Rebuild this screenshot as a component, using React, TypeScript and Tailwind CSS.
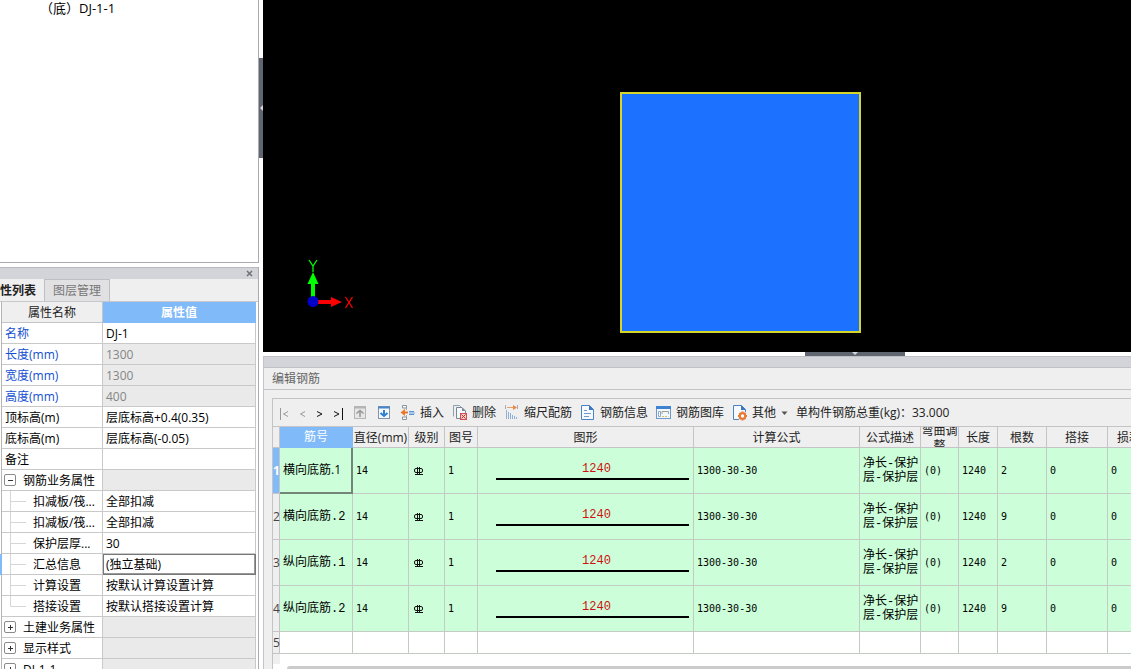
import { ReactNode } from "react";
import clsx from "clsx";

interface Property {
  name: string;
  value?: string;
  kind?: "key" | "locked" | "group" | "child";
  open?: boolean;
  last?: boolean;
  selected?: boolean;
}

const properties: Property[] = [
  { name: "名称", value: "DJ-1", kind: "key" },
  { name: "长度(mm)", value: "1300", kind: "locked" },
  { name: "宽度(mm)", value: "1300", kind: "locked" },
  { name: "高度(mm)", value: "400", kind: "locked" },
  { name: "顶标高(m)", value: "层底标高+0.4(0.35)" },
  { name: "底标高(m)", value: "层底标高(-0.05)" },
  { name: "备注" },
  { name: "钢筋业务属性", kind: "group", open: true },
  { name: "扣减板/筏...", value: "全部扣减", kind: "child" },
  { name: "扣减板/筏...", value: "全部扣减", kind: "child" },
  { name: "保护层厚...", value: "30", kind: "child" },
  { name: "汇总信息", value: "(独立基础)", kind: "child", selected: true },
  { name: "计算设置", value: "按默认计算设置计算", kind: "child" },
  { name: "搭接设置", value: "按默认搭接设置计算", kind: "child", last: true },
  { name: "土建业务属性", kind: "group" },
  { name: "显示样式", kind: "group" },
  { name: "DJ-1-1", kind: "group" },
];

const bars = [
  { name: "横向底筋.1", count: 2 },
  { name: "横向底筋.2", count: 9 },
  { name: "纵向底筋.1", count: 2 },
  { name: "纵向底筋.2", count: 9 },
];

const columns = [
  { title: "直径(mm)", width: "w-[56px]" },
  { title: "级别", width: "w-[36px]" },
  { title: "图号", width: "w-[33px]" },
  { title: "图形", width: "w-[216px]" },
  { title: "计算公式", width: "w-[166px]" },
  { title: "公式描述", width: "w-[61px]" },
  { title: "弯曲调整", width: "w-[38px]" },
  { title: "长度", width: "w-[39px]" },
  { title: "根数", width: "w-[49px]" },
  { title: "搭接", width: "w-[61px]" },
  { title: "损耗", width: "w-auto" },
];

function Icon({ children }: { children: ReactNode }) {
  return (
    <svg
      viewBox="0 0 16 16"
      className="h-4 w-4 shrink-0"
      fill="none"
      aria-hidden="true"
    >
      {children}
    </svg>
  );
}

function NavButton({ label, children }: { label: string; children: ReactNode }) {
  return (
    <button aria-label={label} className="h-4 w-[10px] shrink-0">
      <svg viewBox="0 0 10 16" className="h-4 w-[10px]" fill="none">
        {children}
      </svg>
    </button>
  );
}

function ToolButton({ icon, label }: { icon: ReactNode; label: string }) {
  return (
    <button className="flex shrink-0 items-center gap-1">
      {icon}
      <span>{label}</span>
    </button>
  );
}

function Toolbar() {
  return (
    <div className="flex h-[28px] items-center gap-2 overflow-hidden border-b border-[#c4c4c6] pt-px pl-[7px] whitespace-nowrap text-[#222]">
      <NavButton label="第一条">
        <path d="M.5 3v12" stroke="#999" />
        <path d="M8 6.500 3.500 9 8 11.500" stroke="#999" />
      </NavButton>
      <NavButton label="上一条">
        <path d="M7 6.500 2.500 9 7 11.500" stroke="#999" />
      </NavButton>
      <NavButton label="下一条">
        <path d="M1 6.500 6 9l-5 2.500" stroke="#111" />
      </NavButton>
      <NavButton label="最后一条">
        <path d="M8.500 3v12" stroke="#111" />
        <path d="M0 6.500 5 9l-5 2.500" stroke="#111" />
      </NavButton>
      <button aria-label="上移" className="shrink-0">
        <Icon>
          <rect x="2.500" y="1.500" width="11" height="12" fill="#e6e6e6" stroke="#b5b5b5" />
          <path d="M2 2.500h12" stroke="#b5b5b5" strokeWidth="2" />
          <path d="M8 12V6M4.500 8.500 8 5.500l3.500 3" stroke="#999" strokeWidth="1.600" />
        </Icon>
      </button>
      <button aria-label="下移" className="shrink-0">
        <Icon>
          <rect x="2.500" y="1.500" width="11" height="12" fill="#f6fafe" stroke="#7f95ad" />
          <path d="M2 2.500h12" stroke="#4a86c8" strokeWidth="2" />
          <path d="M8 5v6M4.500 8 8 11l3.500-3" stroke="#2f80d0" strokeWidth="2" />
        </Icon>
      </button>
      <ToolButton
        label="插入"
        icon={
          <Icon>
            <path d="M2.500 3V.5h4V3z" fill="#fafafa" stroke="#8a949e" />
            <path d="M2.500 14.500V12h4v2.500z" fill="#fafafa" stroke="#8a949e" />
            <path d="M6.500 3v2M6.500 10v2" stroke="#a5acb3" />
            <path d="M8 7.500H4" stroke="#e8772e" strokeWidth="2" />
            <path d="M.5 7.500 5 4v7z" fill="#e8772e" />
            <path d="M9 6.500h5M9 9.500h5" stroke="#5d94d3" />
            <path d="M9 8h6" stroke="#a9c8ea" strokeWidth="2" />
          </Icon>
        }
      />
      <ToolButton
        label="删除"
        icon={
          <Icon>
            <path d="M1.500 11.500v-11h6l2 2" stroke="#8fa0ae" />
            <path d="M4.500 13.500v-11h5.500l3.500 3.500v3" fill="#f5f8fb" stroke="#7a8794" />
            <path d="M4.500 13.500H8" stroke="#7a8794" />
            <path d="M10 2.500 13.500 6H10z" fill="#7a8794" />
            <rect x="8.500" y="8.500" width="6" height="6" fill="#f6d0d0" stroke="#d64d4d" />
            <path d="m9.500 9.500 4 4m0-4-4 4" stroke="#cc2d2d" />
          </Icon>
        }
      />
      <ToolButton
        label="缩尺配筋"
        icon={
          <Icon>
            <path d="M1.500 0v4M13.500 0v4" stroke="#aaa" />
            <path d="M3 2.500h7" stroke="#e8a070" />
            <path d="M9 0l4 2.500L9 5z" fill="#e8884a" />
            <path
              d="M2.500 5v9M4.500 7v7M6.500 8v6M8.500 10v4M10.500 11v3M12.500 12v2"
              stroke="#8fb0d8"
            />
          </Icon>
        }
      />
      <ToolButton
        label="钢筋信息"
        icon={
          <Icon>
            <path d="M1.500 .5h8l4 4v10h-12z" fill="#f6faff" stroke="#4a84c4" />
            <path d="M9 0v5h5z" fill="#3b78bd" />
            <path d="M4 5.500h3M4 8.500h7M4 11.500h5" stroke="#6d9bce" />
          </Icon>
        }
      />
      <ToolButton
        label="钢筋图库"
        icon={
          <Icon>
            <rect x=".5" y="1.500" width="14" height="12" fill="#f2f7fc" stroke="#6c9ace" />
            <rect y="1" width="15" height="3" fill="#3e83d2" />
            <path d="M2.500 6.500h2v5h-2z" fill="#fff" stroke="#8fa8c4" />
            <path d="M6 9V6.500h6.500V9" stroke="#99a39a" />
            <path d="M6 11.500h6.500" stroke="#d9b96a" strokeDasharray="2 1" />
          </Icon>
        }
      />
      <button className="flex shrink-0 items-center gap-1">
        <Icon>
          <path d="M1.500 .5h8l4 4v10h-12z" fill="#f6faff" stroke="#4a84c4" />
          <path d="M9 0v5h5z" fill="#3b78bd" />
          <circle cx="10.500" cy="11" r="5" fill="#efefef" />
          <path
            d="M10.500 6.500v9M6 11h9M7.500 8l6 6M13.500 8l-6 6"
            stroke="#e97931"
            strokeWidth="2"
          />
          <circle cx="10.500" cy="11" r="2.700" fill="#fff" stroke="#e97931" strokeWidth="2" />
        </Icon>
        <span>其他</span>
        <svg viewBox="0 0 8 8" className="h-2 w-2" aria-hidden="true">
          <path d="M1.500 2.500h6L4.500 6z" fill="#555" />
        </svg>
      </button>
      <span>单构件钢筋总重(kg)：33.000</span>
    </div>
  );
}

function PropertyRow({ item }: { item: Property }) {
  const isBlue = item.kind === "key" || item.kind === "locked";
  const isGrey = item.kind === "locked" || item.kind === "group";
  return (
    <tr className="h-[21px]">
      <th
        scope="row"
        className={clsx(
          "overflow-hidden border-r border-b border-[#c9c9c9] p-0 text-left font-normal whitespace-nowrap",
          item.selected && "shadow-[-2px_0_0_#80baf9]",
          isBlue && "text-[#1450d0]"
        )}
      >
        <div className="flex h-5 items-center">
          {item.kind === "group" && (
            <button
              aria-label={item.name}
              className="mr-[7px] ml-[2px] h-3 w-3 shrink-0 rounded-xs border border-[#8a8a8a] bg-white"
            >
              <svg viewBox="0 0 10 10" className="h-[10px] w-[10px]" stroke="#333">
                <path d={item.open ? "M3 5.500h5" : "M3 5.500h5M5.500 3v5"} />
              </svg>
            </button>
          )}
          {item.kind === "child" && (
            <svg
              viewBox="0 0 31 21"
              className="h-[21px] w-[31px] shrink-0"
              stroke="#d6d6d6"
              fill="none"
              aria-hidden="true"
            >
              <path d={item.last ? "M8.500 0v10.500H24" : "M8.500 0v21M8.500 10.500H24"} />
            </svg>
          )}
          <span className={clsx("pt-px", (!item.kind || isBlue) && "pl-[3px]")}>
            {item.name}
          </span>
        </div>
      </th>
      <td
        className={clsx(
          "overflow-hidden p-0 pt-px pl-[3px] whitespace-nowrap",
          isGrey && "bg-[#eaeaea]",
          item.kind === "locked" && "text-[#858585]",
          item.selected
            ? "border-r border-b border-[#777] shadow-[inset_1px_1px_0_#777,inset_-1px_-1px_0_#999]"
            : "border-r border-b border-[#c9c9c9]"
        )}
      >
        {item.value}
      </td>
    </tr>
  );
}

function PropertyPanel() {
  return (
    <section className="mt-1 flex min-h-0 flex-1 flex-col border-r border-[#aaaab0] bg-white">
      <div className="flex h-3 shrink-0 items-center justify-end border-t border-[#b9b9c0] bg-[#d3d4d9] pr-1">
        <button aria-label="关闭" className="h-[9px] w-[9px]">
          <svg viewBox="0 0 9 9" className="h-[9px] w-[9px]">
            <path d="m2 2 5 5m0-5L2 7" stroke="#707078" strokeWidth="1.500" />
          </svg>
        </button>
      </div>
      <div className="flex h-[23px] shrink-0 border-b border-[#c8c8cc] bg-[#efefef]">
        <button className="flex w-[45px] items-center justify-end overflow-hidden border-r border-[#bfbfc3] pt-px pr-2 font-bold whitespace-nowrap text-[#222]">
          属性列表
        </button>
        <button className="w-[65px] border-t border-r border-[#bfbfc3] bg-[#e1e1e3] text-[#777]">
          图层管理
        </button>
      </div>
      <div className="min-h-0 flex-1 overflow-hidden pr-[2px] pl-px">
        <table className="w-full table-fixed border-separate border-spacing-0 border-l border-[#b5b5b8] leading-4">
          <thead>
            <tr className="h-[21px]">
              <th className="w-[101px] border-r border-b border-[#c4c4c6] bg-[#efefef] p-0 pt-px font-normal text-[#222]">
                属性名称
              </th>
              <th className="border-r border-b border-[#80baf9] bg-[#80baf9] p-0 pt-px font-bold text-white">
                属性值
              </th>
            </tr>
          </thead>
          <tbody>
            {properties.map((item, i) => (
              <PropertyRow key={i} item={item} />
            ))}
          </tbody>
        </table>
      </div>
    </section>
  );
}

function Canvas() {
  return (
    <div className="relative min-h-0 flex-1 overflow-hidden bg-black">
      <div className="absolute top-[92px] left-[357px] h-[241px] w-[241px] border-2 border-[#d6d62a] bg-[#1c72ff]" />
      {/* Coordinate axes */}
      <svg
        viewBox="0 0 60 60"
        className="absolute top-[254px] left-[40px] h-[60px] w-[60px]"
        fill="none"
        role="img"
        aria-label="XY"
      >
        <path d="M10 47V28" stroke="#0f0" strokeWidth="4" />
        <path d="M4.500 30 10 18l5.500 12z" fill="#0f0" />
        <path d="M10 48h20" stroke="#f00" strokeWidth="4" />
        <path d="M28 43l11 5-11 5z" fill="#f00" />
        <circle cx="10" cy="47.500" r="5.500" fill="#0000c8" />
        <path d="M6 6l4 6 4-6M10 12v6" stroke="#0f0" strokeWidth="1.300" />
        <path d="M42.500 43l7 11m0-11-7 11" stroke="#f00" strokeWidth="1.300" />
      </svg>
    </div>
  );
}

function RebarGrade() {
  return (
    <svg
      viewBox="0 0 10 10"
      className="ml-[2px] h-[10px] w-[10px]"
      stroke="#111"
      fill="none"
      role="img"
      aria-label="三级钢"
    >
      <rect x=".5" y="2.500" width="8" height="4" rx="1.500" />
      <path d="M3.500 1v8M5.500 1v8M1 8.500h8" />
    </svg>
  );
}

const cell = "overflow-hidden border-r border-b border-[#c3ccc3] p-0 pl-[3px]";
const figures = "font-['DejaVu_Sans_Mono',monospace] text-[10px]";

function RebarTable() {
  return (
    <table className="w-full min-w-[878px] table-fixed border-separate border-spacing-0 text-black">
      <thead>
        <tr className="h-[21px] text-[#222]">
          <th className="w-[7px] border-r border-b border-[#c4c4c6] p-0" />
          <th className="w-[73px] border-r border-b border-[#80baf9] bg-[#80baf9] p-0 font-normal text-white">
            筋号
          </th>
          {columns.map((column) => (
            <th
              key={column.title}
              className={clsx(
                "border-r border-b border-[#c4c4c6] p-0 font-normal",
                column.width
              )}
            >
              <div className="flex h-5 items-center justify-center overflow-hidden pt-px leading-[15px]">
                {column.title}
              </div>
            </th>
          ))}
        </tr>
      </thead>
      <tbody>
        {bars.map((bar, i) => (
          <tr key={bar.name} className="h-[46px] bg-[#ccffd9]">
            <th
              scope="row"
              className={clsx(
                "border-r border-b border-[#c4c4c6] p-0 leading-4",
                i === 0
                  ? "bg-[#80baf9] font-bold text-white"
                  : "bg-[#efefef] font-normal text-[#444]"
              )}
            >
              {i + 1}
            </th>
            <td
              className={clsx(
                "overflow-hidden p-0 pl-[3px] whitespace-nowrap",
                i === 0
                  ? "border-r-2 border-b-2 border-[#728577]"
                  : "border-r border-b border-[#c3ccc3] font-['Liberation_Mono','Noto_Sans_CJK_SC',monospace]"
              )}
            >
              {bar.name}
            </td>
            <td className={clsx(cell, figures)}>14</td>
            <td className={cell}>
              <RebarGrade />
            </td>
            <td className={clsx(cell, figures)}>1</td>
            <td className="border-r border-b border-[#c3ccc3] p-0 pr-1 pl-[18px]">
              <div className="border-b-2 border-black pt-px pb-[2px] pl-2 text-center font-['Liberation_Mono',monospace] leading-[14px] text-[#d01010]">
                1240
              </div>
            </td>
            <td className={clsx(cell, figures)}>1300-30-30</td>
            <td
              className={clsx(
                cell,
                "font-['Liberation_Mono','Noto_Sans_CJK_SC',monospace] leading-[14px] whitespace-nowrap"
              )}
            >
              净长-保护
              <br />
              层-保护层
            </td>
            <td className={clsx(cell, figures)}>(0)</td>
            <td className={clsx(cell, figures)}>1240</td>
            <td className={clsx(cell, figures)}>{bar.count}</td>
            <td className={clsx(cell, figures)}>0</td>
            <td className={clsx(cell, figures)}>0</td>
          </tr>
        ))}
        <tr className="h-[22px] bg-white">
          <th
            scope="row"
            className="border-r border-b border-[#c4c4c6] bg-[#efefef] p-0 font-normal text-[#444]"
          >
            5
          </th>
          <td className={cell} />
          {columns.map((column) => (
            <td key={column.title} className={cell} />
          ))}
        </tr>
      </tbody>
    </table>
  );
}

export default function App() {
  return (
    <div className="flex h-screen overflow-hidden bg-white font-['Open_Sans','Noto_Sans_CJK_SC',sans-serif] text-xs text-black">
      <aside className="flex w-[259px] shrink-0 flex-col">
        <div className="h-[263px] shrink-0 border-r border-b border-[#aaaab0] pl-10 text-[13px] leading-4">
          （底）DJ-1-1
        </div>
        <PropertyPanel />
      </aside>

      {/* Splitter with its collapse handle */}
      <div className="flex w-1 shrink-0 flex-col">
        <div className="h-[58px]" />
        <button
          aria-label="收起"
          className="flex h-[100px] items-center justify-end bg-[#5f666f]"
        >
          <svg viewBox="0 0 4 6" className="h-[6px] w-1">
            <path d="M4 0v6L1 3z" fill="#d5d8dc" />
          </svg>
        </button>
      </div>

      <main className="flex min-w-0 flex-1 flex-col">
        <Canvas />
        <div className="flex h-1 shrink-0">
          <button
            aria-label="收起"
            className="ml-[542px] flex w-[100px] justify-center bg-[#5f666f]"
          >
            <svg viewBox="0 0 6 4" className="h-1 w-[6px]">
              <path d="M0 0h6L3 3z" fill="#d5d8dc" />
            </svg>
          </button>
        </div>
        <section className="shrink-0 border-l border-[#c4c4c6] bg-[#efefef]">
          <div className="h-3 border-t border-b border-[#c0c1c7] bg-[#d3d4d9]" />
          <h2 className="flex h-[22px] items-center border-b border-[#c4c4c6] pl-2 text-[#666]">
            编辑钢筋
          </h2>
          <div className="mt-2 ml-2 overflow-hidden border-t border-l border-[#c4c4c6]">
            <Toolbar />
            <RebarTable />
            <div className="flex h-[15px] flex-col bg-white">
              <div className="h-[10px] w-[7px] bg-[#efefef]" />
              <div className="mt-[2px] ml-[14px] flex-1 rounded-tl-sm bg-[#cbcbcb]" />
            </div>
          </div>
        </section>
      </main>
    </div>
  );
}
